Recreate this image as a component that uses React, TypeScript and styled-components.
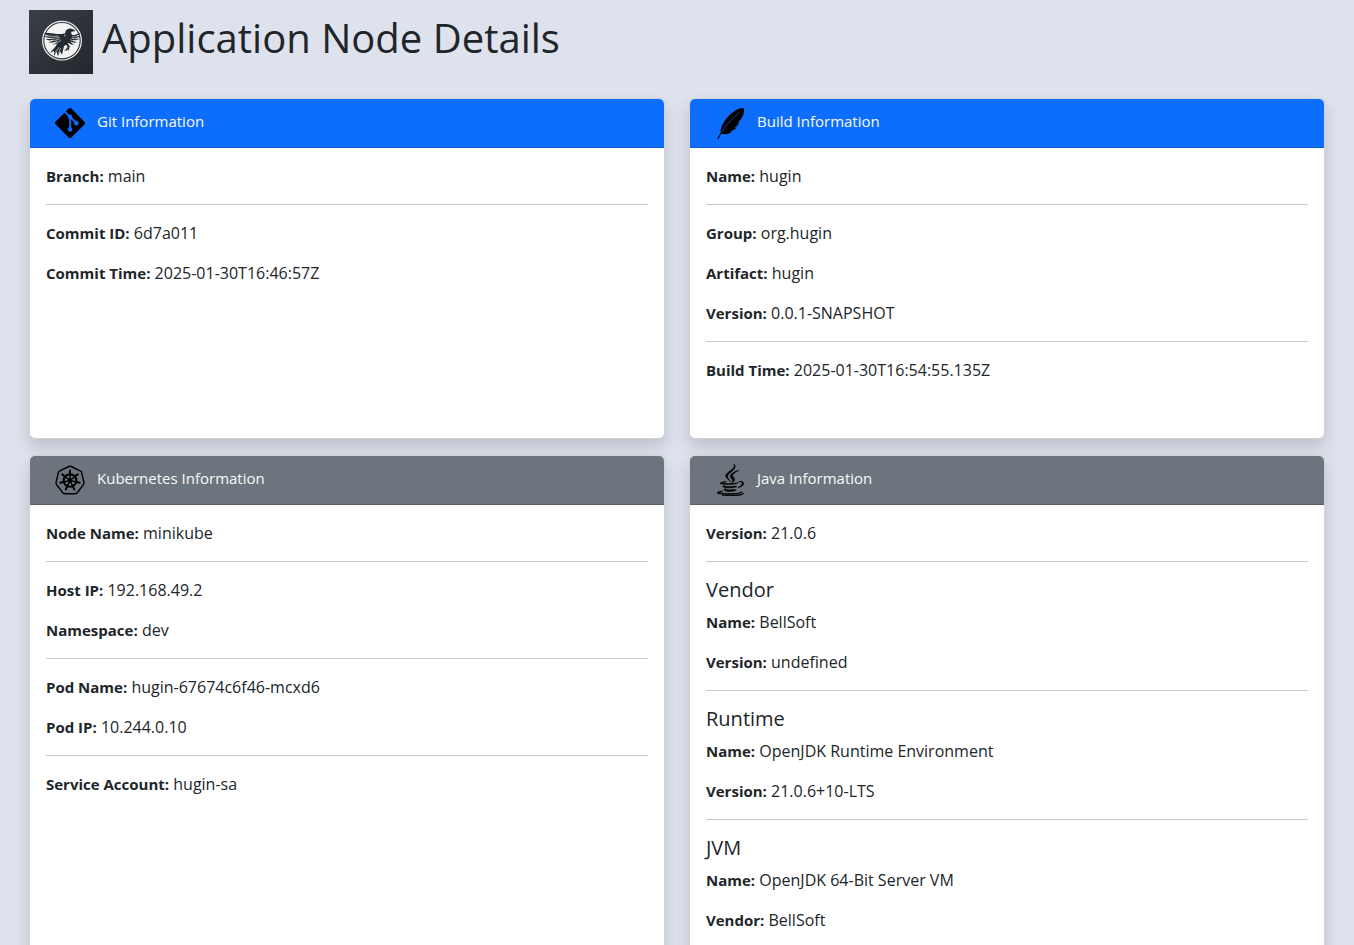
import React from "react";
import styled, { createGlobalStyle } from "styled-components";
import { SiGit } from "react-icons/si";
import { FaJava } from "react-icons/fa";

const GlobalStyle = createGlobalStyle`
  *, *::before, *::after { box-sizing: border-box; }
  body {
    margin: 0;
    background: #dee2ed;
    color: #212529;
    font-family: "Open Sans", "Noto Sans", sans-serif;
    font-size: 16px;
    line-height: 24px;
  }
`;

const Page = styled.main`
  height: 100vh;
  overflow: hidden;
  padding: 10px 29px 0;
`;

const PageHeader = styled.header`
  display: flex;
  align-items: flex-start;
  gap: 9px;
  margin-bottom: 24px;
`;

const Logo = styled.svg`
  flex: none;
  width: 64px;
  height: 64px;
`;

const Title = styled.h1`
  margin: 0;
  font-size: 40px;
  font-weight: 400;
  line-height: 56px;
`;

const CardGrid = styled.div`
  display: grid;
  grid-template-columns: 1fr 1fr;
  gap: 16px 24px;
`;

const Card = styled.section`
  min-height: 341px;
  border: 1px solid rgba(0, 0, 0, 0.175);
  border-radius: 6px;
  background: #fff;
  box-shadow: 0 8px 16px rgba(0, 0, 0, 0.15);
`;

const CardHeader = styled.header<{ $tone: "primary" | "secondary" }>`
  display: flex;
  align-items: flex-start;
  gap: 11px;
  padding: 8px 24px;
  border-bottom: 1px solid rgba(0, 0, 0, 0.175);
  border-radius: 5px 5px 0 0;
  background: ${(p) => (p.$tone === "primary" ? "#0d6efd" : "#6c757d")};
`;

const IconSlot = styled.span`
  display: flex;
  align-items: center;
  justify-content: center;
  width: 32px;
  height: 32px;
  color: #000;
`;

const CardTitle = styled.h2`
  margin: 0;
  color: #f8f9fa;
  font-size: 15px;
  font-weight: 400;
  line-height: 28px;
`;

const CardBody = styled.div`
  padding: 16px;
`;

const Field = styled.p`
  margin: 0 0 16px;
`;

const Label = styled.strong`
  font-size: 15px;
  font-weight: 700;
`;

const Divider = styled.hr`
  margin: 16px 0;
  border: 0;
  border-top: 1px solid #c8c9ca;
`;

const GroupTitle = styled.h3`
  margin: 0 0 8px;
  font-size: 20px;
  font-weight: 400;
  line-height: 24px;
`;

const RavenLogo = () => (
  <Logo viewBox="0 0 64 64" role="img" aria-label="Hugin">
    <defs>
      <linearGradient id="slate" x1="0" y1="0" x2="1" y2="1">
        <stop offset="0" stopColor="#3a4047" />
        <stop offset="1" stopColor="#23272d" />
      </linearGradient>
    </defs>
    <rect width="64" height="64" fill="url(#slate)" />
    <g transform="translate(11 10) scale(.3333)">
      <circle cx="66" cy="62" r="58" fill="none" stroke="#f2f3f2" strokeWidth="3.5" />
      <circle cx="66" cy="62" r="53" fill="#f2f3f2" />
      <g fill="#242b32">
        <path d="M76 48C74 36 78 27 87 26C95 24 100 29 107 33L94 35C93 39 94 43 98 45C94 62 84 73 72 78L66 104L60 94L54 109L50 95L42 107L42 93L30 99C38 88 47 81 51 72C54 65 60 58 62 52Z" />
        <path d="M76 38C66 47 44 39 13 38C16 45 23 48 31 48C25 49 19 49 14 48C19 54 27 55 37 53C31 57 24 58 18 57C24 63 34 62 43 58C38 63 31 66 25 66C34 71 46 67 54 61C50 67 44 71 38 73C50 75 62 67 70 56Z" />
        <path d="M91 44C100 49 110 42 120 38C118 44 113 47 108 49C113 49 118 48 121 46C118 53 111 55 104 54C109 57 114 57 118 55C113 62 105 62 98 59C102 64 107 66 112 65C105 70 97 68 91 64C94 69 98 72 102 73C94 76 86 71 82 64Z" />
        <path d="M77 72L83 80L78 88L72 91L79 92L83 87L84 93L88 87L86 81L92 83L87 76L82 69Z" />
      </g>
      <path
        d="M16 46Q38 52 56 48M20 55Q40 57 58 52M28 64Q46 62 60 56M42 72Q54 68 64 60M118 45Q106 52 96 51M117 54Q106 58 95 55M109 64Q100 64 91 59M57 82L44 100M62 84L55 101"
        fill="none"
        stroke="#f2f3f2"
        strokeWidth="1.8"
      />
    </g>
  </Logo>
);

const FeatherIcon = () => (
  <svg viewBox="0 0 32 32" width="32" height="32" aria-hidden="true">
    <path d="M29.7 1C24 .7 18.6 5 15 8.6C11.4 12.300 8.300 17 7 21.400C6.500 23.300 6.400 24.800 6.700 25.900C5.200 28 4 29.900 3 32L4.700 31.600C5.400 29.800 6.300 28.300 7.400 26.800C12 27.800 15.300 27 17.600 24.700L16 24.600C18.700 23.900 20.800 22.700 22.400 20.800L20.200 20.900C22.600 19.700 24.200 18.100 25.300 15.600L23.300 15.800C26.900 13.300 31.400 6.500 29.700 1Z" />
    <path d="M25.500 5.500C19 10.500 12.500 17.500 7.700 25" fill="none" stroke="#0d6efd" strokeWidth=".6" />
  </svg>
);

const spokeAngles = Array.from({ length: 7 }, (_, i) => (i * 360) / 7);

const HelmIcon = () => (
  <svg viewBox="0 0 32 32" width="32" height="32" fill="none" stroke="#000" aria-hidden="true">
    <path
      d="M14.800 2.500Q16 1.900 17.200 2.500L26.200 6.800Q27.400 7.400 27.700 8.700L29.900 18.500Q30.200 19.800 29.400 20.800L23.200 28.700Q22.300 29.700 21 29.700H11Q9.700 29.700 8.800 28.700L2.600 20.800Q1.800 19.800 2.100 18.500L4.300 8.700Q4.600 7.400 5.800 6.800Z"
      strokeWidth="1.400"
    />
    <circle cx="16" cy="16.500" r="6.300" strokeWidth="2.100" />
    <circle cx="16" cy="16.500" r="1.700" fill="#000" />
    {spokeAngles.map((angle) => (
      <g key={angle} transform={`rotate(${angle} 16 16.500)`}>
        <path d="M16 16.500V7" strokeWidth="1.500" />
        <path d="M16 8.500V6.500" strokeWidth="1.900" strokeLinecap="round" />
      </g>
    ))}
  </svg>
);

const JavaIcon = styled(FaJava).attrs({ preserveAspectRatio: "none" })`
  width: 27px;
  height: 32px;
  stroke: #000;
  stroke-width: 10px;
`;

const Entry = ({ label, value }: { label: string; value: string }) => (
  <Field>
    <Label>{label}:</Label> {value}
  </Field>
);

export default function App() {
  return (
    <Page>
      <GlobalStyle />
      <PageHeader>
        <RavenLogo />
        <Title>Application Node Details</Title>
      </PageHeader>
      <CardGrid>
        <Card>
          <CardHeader $tone="primary">
            <IconSlot><SiGit size={30} /></IconSlot>
            <CardTitle>Git Information</CardTitle>
          </CardHeader>
          <CardBody>
            <Entry label="Branch" value="main" />
            <Divider />
            <Entry label="Commit ID" value="6d7a011" />
            <Entry label="Commit Time" value="2025-01-30T16:46:57Z" />
          </CardBody>
        </Card>
        <Card>
          <CardHeader $tone="primary">
            <IconSlot><FeatherIcon /></IconSlot>
            <CardTitle>Build Information</CardTitle>
          </CardHeader>
          <CardBody>
            <Entry label="Name" value="hugin" />
            <Divider />
            <Entry label="Group" value="org.hugin" />
            <Entry label="Artifact" value="hugin" />
            <Entry label="Version" value="0.0.1-SNAPSHOT" />
            <Divider />
            <Entry label="Build Time" value="2025-01-30T16:54:55.135Z" />
          </CardBody>
        </Card>
        <Card>
          <CardHeader $tone="secondary">
            <IconSlot><HelmIcon /></IconSlot>
            <CardTitle>Kubernetes Information</CardTitle>
          </CardHeader>
          <CardBody>
            <Entry label="Node Name" value="minikube" />
            <Divider />
            <Entry label="Host IP" value="192.168.49.2" />
            <Entry label="Namespace" value="dev" />
            <Divider />
            <Entry label="Pod Name" value="hugin-67674c6f46-mcxd6" />
            <Entry label="Pod IP" value="10.244.0.10" />
            <Divider />
            <Entry label="Service Account" value="hugin-sa" />
          </CardBody>
        </Card>
        <Card>
          <CardHeader $tone="secondary">
            <IconSlot><JavaIcon /></IconSlot>
            <CardTitle>Java Information</CardTitle>
          </CardHeader>
          <CardBody>
            <Entry label="Version" value="21.0.6" />
            <Divider />
            <GroupTitle>Vendor</GroupTitle>
            <Entry label="Name" value="BellSoft" />
            <Entry label="Version" value="undefined" />
            <Divider />
            <GroupTitle>Runtime</GroupTitle>
            <Entry label="Name" value="OpenJDK Runtime Environment" />
            <Entry label="Version" value="21.0.6+10-LTS" />
            <Divider />
            <GroupTitle>JVM</GroupTitle>
            <Entry label="Name" value="OpenJDK 64-Bit Server VM" />
            <Entry label="Vendor" value="BellSoft" />
          </CardBody>
        </Card>
      </CardGrid>
    </Page>
  );
}
